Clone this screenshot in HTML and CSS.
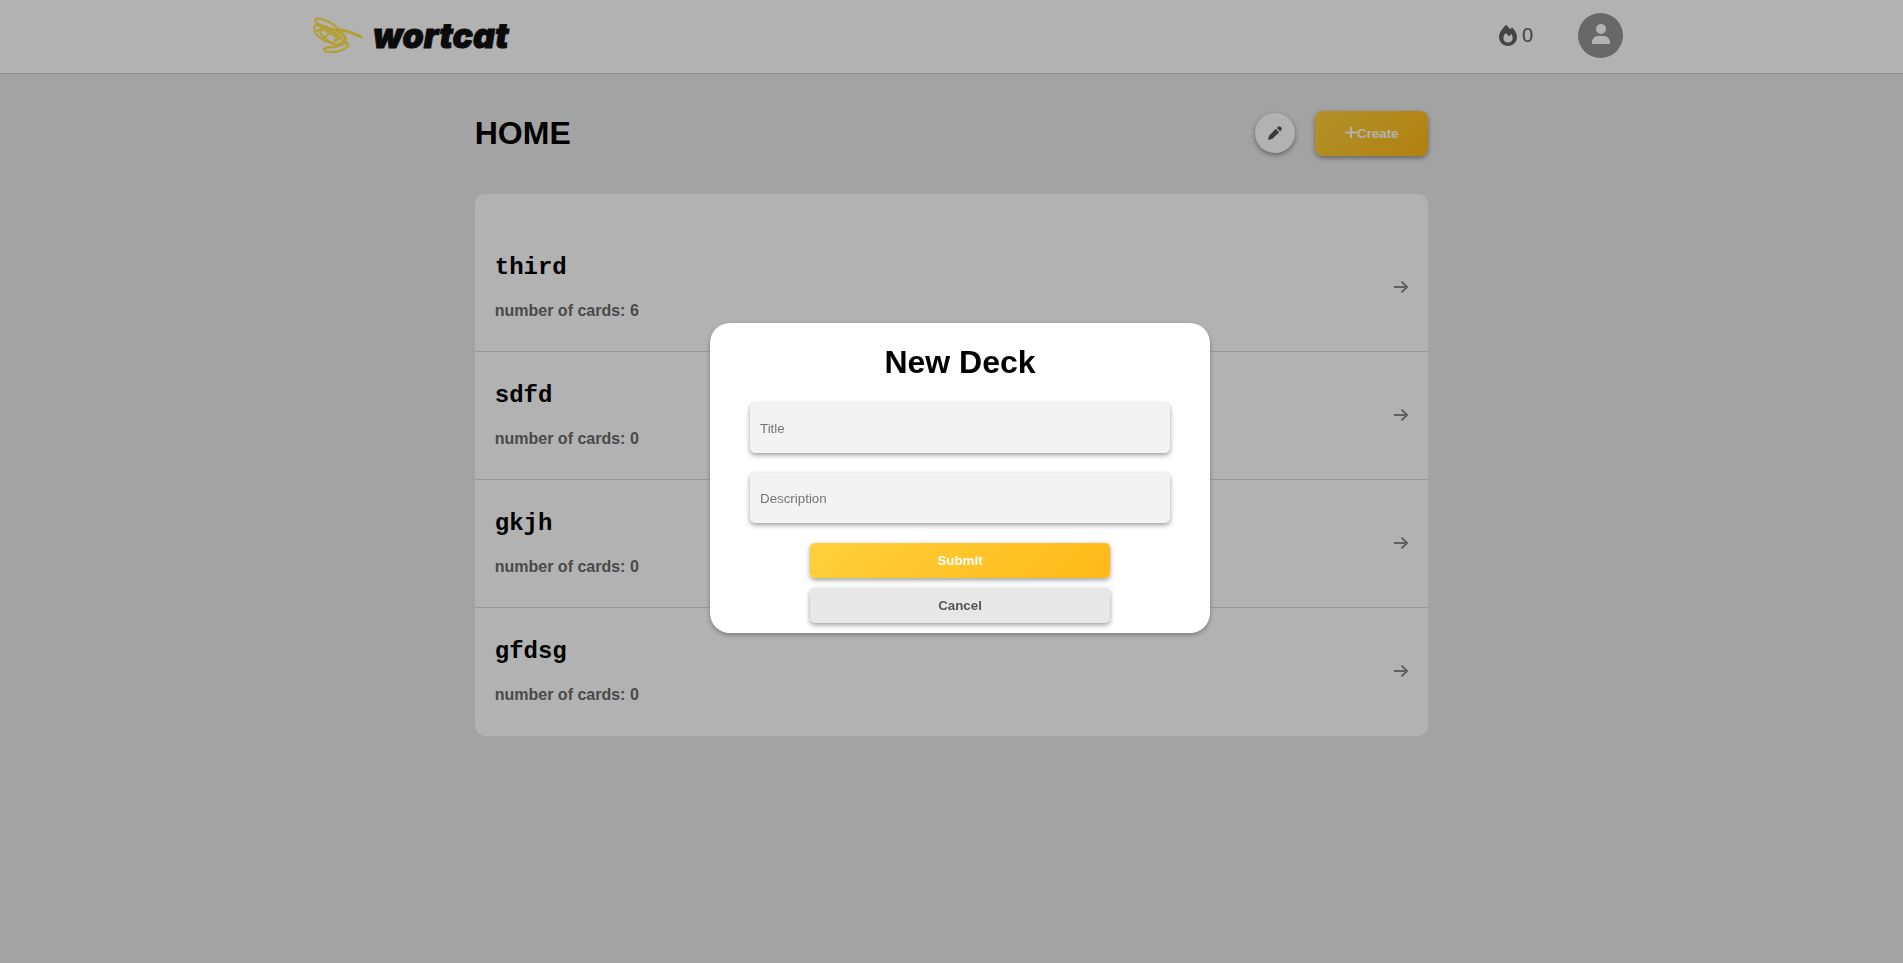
FILE: index.html
```html
<!DOCTYPE html>
<html lang="en">
<head>
<meta charset="utf-8">
<title>wortcat</title>
<link rel="stylesheet" href="styles.css">
</head>
<body>
<header class="header">
  <a class="logo" href="#">
    <svg class="logo-mark" viewBox="0 0 50 37" aria-hidden="true">
      <g fill="none" stroke="currentColor" stroke-width="2.200" stroke-linecap="round" stroke-linejoin="round">
        <path d="M26 13C22 7 8 0 3 2C-1 6 12 10 20 12C24 13 27 15 30 18"/>
        <path d="M26 13C31 17 35 23 32 26C26 30 10 25 4 18C-1 11 1 6 7 9C16 11 29 19 31 26"/>
        <path d="M4 14C8 10 18 11 25 14C33 18 34 24 31 27C24 30 13 24 8 17C5 12 10 11 14 15"/>
        <path d="M10 22L17 16L14 13L22 19L26 15L22 24L29 20"/>
        <path d="M28 25C23 33 14 28 11 32C10 36 24 36 31 32C37 29 36 24 30 27C25 31 18 30 13 31"/>
        <path d="M26 13C34 13 42 17 48 20" stroke-width="3"/>
      </g>
    </svg>
    <span class="logo-text">wortcat</span>
  </a>
  <div class="account">
    <div class="streak">
      <svg class="streak-icon" viewBox="0 0 18 21" aria-hidden="true">
        <path fill="currentColor" fill-rule="evenodd" d="M7 0C9 1.500 10.300 3 11.200 4.400L13 2.200C16 5 18 8.500 18 12C18 17 14 21 9 21S0 17 0 12C0 8 3.200 3.500 7 0ZM6.800 8C5.200 9.500 4.400 11.300 4.400 13C4.400 15.800 6.400 17.600 9 17.600S13.700 15.700 13.700 13C13.700 11.500 13 10 12.200 9L10.200 11.500Z"/>
      </svg>
      <span>0</span>
    </div>
    <button class="avatar" type="button" aria-label="Account">
      <svg class="avatar-icon" viewBox="0 0 18 20" aria-hidden="true">
        <circle cx="9" cy="5" r="5" fill="currentColor"/>
        <path fill="currentColor" d="M0 20V18.500C0 14.500 3 12 6.500 12H11.500C15 12 18 14.500 18 18.500V20Z"/>
      </svg>
    </button>
  </div>
</header>
<main class="main">
  <div class="toolbar">
    <h1 class="page-title">HOME</h1>
    <div class="actions">
      <button class="edit" type="button" aria-label="Edit">
        <svg class="edit-icon" viewBox="0 0 14 14" aria-hidden="true">
          <path fill="currentColor" d="M0 14L1 9.800L7.800 2.800L11.200 6.200L4.200 13ZM8.800 1.900L10 .7Q11.200-.4 12.500.8L13.200 1.500Q14.500 2.800 13.300 4L12.100 5.200Z"/>
        </svg>
      </button>
      <button class="create" type="button">
        <svg class="plus-icon" viewBox="0 0 12 12" aria-hidden="true"><path d="M6 0V11M0 5.500H12" stroke="currentColor" stroke-width="2"/></svg>Create
      </button>
    </div>
  </div>
  <ul class="decks">
    <li><a class="deck" href="#"><span class="deck-info"><span class="deck-title">third</span><span class="deck-count">number of cards: 6</span></span>
      <svg class="arrow" viewBox="0 0 14 12" aria-hidden="true"><path d="M0 6H13M7.500.6L13 6L7.500 11.400"/></svg></a></li>
    <li><a class="deck" href="#"><span class="deck-info"><span class="deck-title">sdfd</span><span class="deck-count">number of cards: 0</span></span>
      <svg class="arrow" viewBox="0 0 14 12" aria-hidden="true"><path d="M0 6H13M7.500.6L13 6L7.500 11.400"/></svg></a></li>
    <li><a class="deck" href="#"><span class="deck-info"><span class="deck-title">gkjh</span><span class="deck-count">number of cards: 0</span></span>
      <svg class="arrow" viewBox="0 0 14 12" aria-hidden="true"><path d="M0 6H13M7.500.6L13 6L7.500 11.400"/></svg></a></li>
    <li><a class="deck" href="#"><span class="deck-info"><span class="deck-title">gfdsg</span><span class="deck-count">number of cards: 0</span></span>
      <svg class="arrow" viewBox="0 0 14 12" aria-hidden="true"><path d="M0 6H13M7.500.6L13 6L7.500 11.400"/></svg></a></li>
  </ul>
</main>
<div class="overlay">
  <form class="modal" role="dialog" aria-labelledby="modal-title">
    <h2 class="modal-title" id="modal-title">New Deck</h2>
    <input class="field" type="text" aria-label="Title" placeholder="Title">
    <input class="field" type="text" aria-label="Description" placeholder="Description">
    <div class="modal-actions">
      <button class="submit" type="submit">Submit</button>
      <button class="cancel" type="button">Cancel</button>
    </div>
  </form>
</div>
</body>
</html>
```
FILE: styles.css
```css
* {
  box-sizing: border-box;
}

body {
  margin: 0;
  min-height: 100vh;
  background: #eaeaea;
  color: #000;
  font-family: "Liberation Sans", Arial, sans-serif;
}

button,
input {
  border: 0;
  font-family: inherit;
}

.header {
  display: flex;
  align-items: center;
  justify-content: space-between;
  height: 74px;
  padding: 0 280px 2px 313px;
  background: #fff;
  border-bottom: 1px solid #d0d0d0;
}

.logo {
  display: flex;
  align-items: center;
  gap: 10px;
  color: #111;
  text-decoration: none;
}

.logo-mark {
  width: 50px;
  height: 37px;
  color: #ffe650;
}

.logo-text {
  font: italic 900 34px/36px Inter, sans-serif;
  -webkit-text-stroke: 1px #111;
}

.account {
  display: flex;
  align-items: center;
  gap: 45px;
}

.streak {
  display: flex;
  align-items: center;
  gap: 5px;
  color: #636363;
  font-size: 20px;
}

.streak-icon {
  width: 18px;
  height: 21px;
}

.avatar {
  display: grid;
  place-items: center;
  width: 45px;
  height: 45px;
  padding: 0 0 4px;
  border-radius: 50%;
  background: #969696;
  color: #fff;
}

.avatar-icon {
  width: 18px;
  height: 20px;
}

.main {
  width: calc(50% + 2px);
  margin: 0 auto;
}

.toolbar {
  display: flex;
  align-items: center;
  justify-content: space-between;
  height: 120px;
  padding-bottom: 2px;
}

.page-title,
.modal-title {
  margin: 0;
  font-size: 32px;
  line-height: 38px;
}

.actions {
  display: flex;
  align-items: center;
  gap: 20px;
}

.edit,
.create,
.field,
.submit,
.cancel {
  box-shadow: 0 2px 5px rgba(0, 0, 0, .4);
}

.edit {
  display: grid;
  place-items: center;
  width: 40px;
  height: 40px;
  padding: 0;
  border-radius: 50%;
  background: #fff;
  color: #555;
}

.edit-icon {
  width: 14px;
  height: 14px;
}

.create,
.submit {
  background: linear-gradient(135deg, #ffd03c, #ffb917);
  color: #fff;
  font-weight: bold;
}

.create {
  display: flex;
  align-items: center;
  justify-content: center;
  width: 113px;
  height: 45px;
  padding: 0;
  border-radius: 8px;
}

.plus-icon {
  width: 12px;
  height: 12px;
}

.decks {
  margin: 0;
  padding: 30px 0 1px;
  border-radius: 10px;
  background: #fff;
  list-style: none;
}

.decks li + li {
  border-top: 1px solid #dadada;
}

.deck {
  display: flex;
  align-items: center;
  justify-content: space-between;
  padding: 30px 20px 31px;
  color: #000;
  text-decoration: none;
}

.deck-info {
  display: flex;
  flex-direction: column;
  gap: 21px;
}

.deck-title {
  font: bold 24px/27px "Liberation Mono", monospace;
}

.deck-count {
  color: #6b6b6b;
  font-size: 16px;
  font-weight: bold;
  line-height: 18px;
}

.arrow {
  width: 14px;
  height: 12px;
  fill: none;
  stroke: #8c8c8c;
  stroke-width: 2;
}

.overlay {
  position: fixed;
  inset: 0;
  display: flex;
  align-items: center;
  justify-content: center;
  padding: 0 0 7px 17px;
  background: rgba(0, 0, 0, .3);
}

.modal {
  display: flex;
  flex-direction: column;
  gap: 20px;
  width: 500px;
  padding: 20px 40px 10px;
  border-radius: 20px;
  background: #fff;
  box-shadow: 0 2px 5px rgba(0, 0, 0, .3);
}

.modal-title {
  margin-bottom: 2px;
  text-align: center;
}

.field {
  width: 100%;
  height: 50px;
  padding: 0 10px;
  border-radius: 5px;
  background: #f3f3f3;
}

.field::placeholder {
  color: #757575;
}

.modal-actions {
  display: flex;
  flex-direction: column;
  gap: 10px;
  padding: 0 60px;
}

.submit,
.cancel {
  height: 35px;
  border-radius: 5px;
  font-weight: bold;
}

.cancel {
  background: #e7e7e7;
  color: #555;
}
```
